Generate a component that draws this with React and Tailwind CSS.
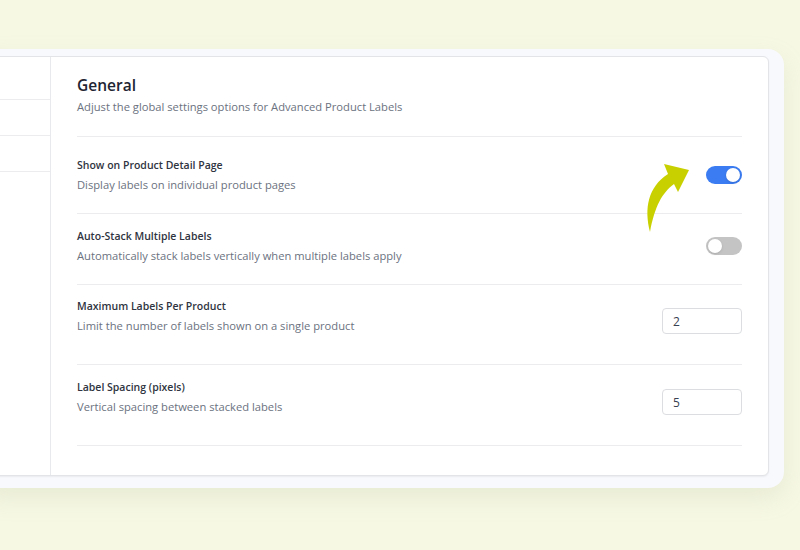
import React, { useState } from "react";

const font = { fontFamily: '"Open Sans", "Noto Sans", sans-serif' };

function Toggle({ on, onChange }) {
  return (
    <button
      type="button"
      onClick={onChange}
      className={
        "relative h-[18px] w-[36px] shrink-0 rounded-full " +
        (on ? "bg-[#3b7cf2]" : "bg-[#c4c4c4]")
      }
    >
      <span
        className={
          "absolute top-[2px] h-[14px] w-[14px] rounded-full bg-white shadow-sm " +
          (on ? "left-[20px]" : "left-[2px]")
        }
      />
    </button>
  );
}

function NumberBox({ value, onChange }) {
  return (
    <input
      type="text"
      value={value}
      onChange={(e) => onChange(e.target.value)}
      className="h-[26px] w-[80px] shrink-0 rounded border border-[#dcdde0] bg-white px-[10px] text-[12px] text-[#374151] outline-none"
    />
  );
}

function Row({ title, desc, pt, pb, extra, children }) {
  return (
    <div className={"flex items-center justify-between border-b border-[#ececee] " + pt + " " + pb}>
      <div className={extra ? "pb-[10px]" : ""}>
        <div className="text-[10.5px] font-semibold leading-[18px] text-[#2f3441]">{title}</div>
        <div className="mt-[2px] text-[11.2px] leading-[18px] text-[#6b7280]">{desc}</div>
      </div>
      {children}
    </div>
  );
}

function Arrow() {
  return (
    <svg
      className="absolute left-[635px] top-[158px]"
      width="60"
      height="78"
      viewBox="0 0 60 78"
    >
      <path
        d="M15 74 C9 50 13 29 33 16 L29 6 L54 12 L43 34 L39 26 C27 35 20 48 15 74 Z"
        fill="#c8d000"
      />
    </svg>
  );
}

export default function App() {
  const [detail, setDetail] = useState(true);
  const [stack, setStack] = useState(false);
  const [maxLabels, setMaxLabels] = useState("2");
  const [spacing, setSpacing] = useState("5");

  return (
    <div className="relative h-[550px] w-[800px] overflow-hidden bg-[#f6f8e4] pt-[49px]" style={font}>
      <div className="-ml-[20px] h-[439px] w-[804px] rounded-2xl bg-[#f8f9fc] pb-[12px] pr-[15px] pt-[7px] shadow-[0_10px_24px_rgba(170,175,140,0.18)]">
        <div className="flex h-full rounded-md border border-[#e3e4e8] bg-white shadow-[0_1px_2px_rgba(0,0,0,0.06)]">
          {/* sidebar */}
          <div className="w-[70px] shrink-0 border-r border-[#e8e9ec]">
            <div className="h-[43px] border-b border-[#ececee]" />
            <div className="h-[36px] border-b border-[#ececee]" />
            <div className="h-[36px] border-b border-[#ececee]" />
          </div>

          {/* content */}
          <div className="flex-1 px-[26px] pt-[16px]">
            <div className="border-b border-[#ececee] pb-[20px]">
              <h1 className="text-[15.5px] font-semibold leading-[24px] text-[#1f2533]">General</h1>
              <p className="mt-[1px] text-[11.2px] leading-[18px] text-[#6b7280]">
                Adjust the global settings options for Advanced Product Labels
              </p>
            </div>

            <Row
              title="Show on Product Detail Page"
              desc="Display labels on individual product pages"
              pt="pt-[19px]"
              pb="pb-[19px]"
            >
              <Toggle on={detail} onChange={() => setDetail((v) => !v)} />
            </Row>
            <Row
              title="Auto-Stack Multiple Labels"
              desc="Automatically stack labels vertically when multiple labels apply"
              pt="pt-[13px]"
              pb="pb-[19px]"
            >
              <Toggle on={stack} onChange={() => setStack((v) => !v)} />
            </Row>
            <Row
              title="Maximum Labels Per Product"
              desc="Limit the number of labels shown on a single product"
              pt="pt-[12px]"
              pb="pb-[19px]"
              extra
            >
              <NumberBox value={maxLabels} onChange={setMaxLabels} />
            </Row>
            <Row
              title="Label Spacing (pixels)"
              desc="Vertical spacing between stacked labels"
              pt="pt-[13px]"
              pb="pb-[19px]"
              extra
            >
              <NumberBox value={spacing} onChange={setSpacing} />
            </Row>
          </div>
        </div>
      </div>
      <Arrow />
    </div>
  );
}
